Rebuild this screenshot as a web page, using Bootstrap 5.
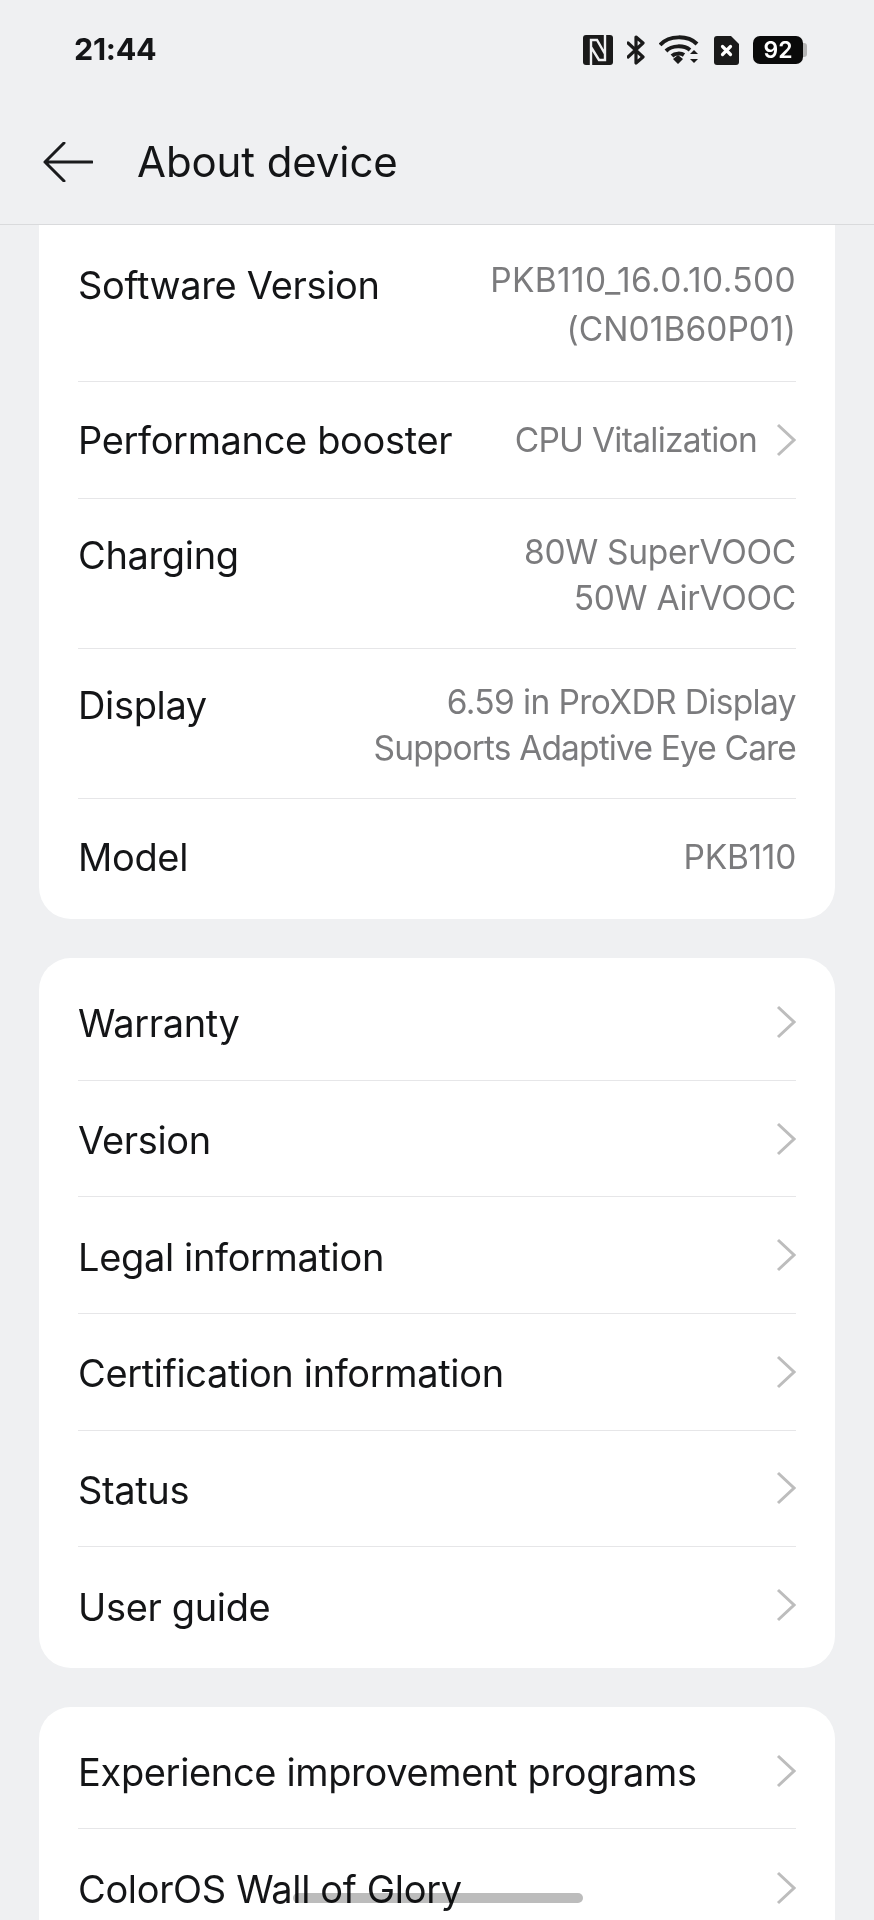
<!DOCTYPE html>
<html lang="en">
  <head>
    <meta charset="UTF-8" />
    <title>About device</title>
    <link href="https://cdn.jsdelivr.net/npm/bootstrap@5.3.0/dist/css/bootstrap.min.css" rel="stylesheet" />
    <script src="https://cdn.jsdelivr.net/npm/bootstrap@5.3.0/dist/js/bootstrap.bundle.min.js"></script>
    <style>
      html, body { height: 1920px; overflow: hidden; }
      body { background: #eff0f2; font-family: Inter, "Liberation Sans", sans-serif; color: #141517; position: relative; }
      .status-strip { height: 100px; padding: 0 71px 0 74px; }
      .clock { font-size: 30.5px; font-weight: 700; line-height: 1; letter-spacing: -0.3px; margin-top: -2px; }
      .status-icons { gap: 14px; }
      .batt { width: 50px; height: 28px; background: #0a0a0a; color: #fff; border-radius: 7px; font-size: 23px; font-weight: 600; line-height: 28px; text-align: center; position: relative; }
      .batt::after { content: ""; position: absolute; right: -4px; top: 7px; width: 4px; height: 14px; background: #b5b5b5; border-radius: 0 3px 3px 0; }
      .title-bar { height: 125px; padding-left: 43px; gap: 44px; border-bottom: 1px solid #d9dadc; }
      .title-text { font-size: 42px; font-weight: 420; line-height: 1; margin: 0; letter-spacing: -0.1px; }
      .scroll-area { height: 1695px; overflow: hidden; padding: 0 39px; }
      .panel { background: #fff; border-radius: 0 0 32px 32px; padding: 0 39px 4px; margin-bottom: 39px; }
      .panel-full { border-radius: 32px; padding-top: 6px; }
      .panel-full .row-label { padding-top: 3px; }
      .info-row { border-bottom: 1px solid #e6e6e8; height: 116.6px; }
      .info-row:last-child { border-bottom: 0; }
      .row-top { height: 157px; padding-top: 34px; }
      .row-top .row-value { line-height: 49px; margin-top: -3px; }
      .row-two { height: 150px; padding-top: 30px; }
      .row-label { font-size: 38px; line-height: 52px; font-weight: 420; letter-spacing: -0.35px; white-space: nowrap; }
      .row-value { font-size: 33.5px; line-height: 46px; color: #7b7b7d; text-align: right; font-weight: 400; letter-spacing: -0.3px; white-space: nowrap; }
      .val-wide { letter-spacing: 0.37px; }
      .val-mid { letter-spacing: 0.05px; }
      .val-tight { letter-spacing: -0.63px; }
      .val-tighter { letter-spacing: -0.85px; }
      .val-cpu { letter-spacing: -0.72px; }
      .value-link { gap: 19px; }
      .chev { flex: none; }
      .home-pill { position: absolute; left: 293px; top: 1893px; width: 290px; height: 10px; background: #bcbcbc; mix-blend-mode: multiply; border-radius: 5px; }
    </style>
  </head>
  <body>
    <div class="status-strip d-flex align-items-center justify-content-between">
      <span class="clock">21:44</span>
      <div class="status-icons d-flex align-items-center">
        <svg width="30" height="30" viewBox="0 0 30 30"><rect width="30" height="30" rx="3" fill="#1a1a1a"/><path d="M8 30V5h6l8 14M22 0v25h-6l-8-13" fill="none" stroke="#eff0f2" stroke-width="2.4"/></svg>
        <svg width="18" height="30" viewBox="0 0 18 30"><path d="M1 8l15 14-7 6V2l7 6L1 22" fill="none" stroke="#1a1a1a" stroke-width="3.2" stroke-linecap="round" stroke-linejoin="round"/></svg>
        <svg width="41" height="30" viewBox="0 0 41 30"><g fill="none" stroke="#1a1a1a" stroke-width="4"><path d="M1 10C10 0 29 0 38 9"/><path d="M7 16c6-6 18-6 24-1"/><path d="M13 21c3-3 9-3 12 -1"/></g><path d="M14 24l5-4 5 4-5 5zM31 19l4-4 4 4zM31 24h8l-4 4z" fill="#1a1a1a"/></svg>
        <svg width="25" height="29" viewBox="0 0 25 29"><path d="M3 0h14l8 8v18a3 3 0 0 1-3 3H3a3 3 0 0 1-3-3V3a3 3 0 0 1 3-3z" fill="#1a1a1a"/><path d="M8.5 10.5l8 8M16.5 10.5l-8 8" stroke="#fff" stroke-width="3.2" stroke-linecap="round"/></svg>
        <div class="batt">92</div>
      </div>
    </div>

    <div class="title-bar d-flex align-items-center">
      <svg width="50" height="40" viewBox="0 0 50 40"><path d="M49 20H2M21 1L2 20l19 19" fill="none" stroke="#1a1b1d" stroke-width="3" stroke-linecap="round" stroke-linejoin="round"/></svg>
      <h1 class="title-text">About device</h1>
    </div>

    <div class="scroll-area">
      <div class="panel">
        <div class="info-row row-top d-flex justify-content-between align-items-start">
          <span class="row-label">Software Version</span>
          <span class="row-value"><span class="val-wide">PKB110_16.0.10.500</span><br /><span class="val-mid">(CN01B60P01)</span></span>
        </div>
        <div class="info-row d-flex justify-content-between align-items-center">
          <span class="row-label">Performance booster</span>
          <span class="d-flex align-items-center value-link">
            <span class="row-value val-cpu">CPU Vitalization</span>
            <svg class="chev" width="20" height="34" viewBox="0 0 20 34"><path d="M2 2l16 15L2 32" fill="none" stroke="#bdbdbd" stroke-width="3"/></svg>
          </span>
        </div>
        <div class="info-row row-two d-flex justify-content-between align-items-start">
          <span class="row-label">Charging</span>
          <span class="row-value">80W SuperVOOC<br />50W AirVOOC</span>
        </div>
        <div class="info-row row-two d-flex justify-content-between align-items-start">
          <span class="row-label">Display</span>
          <span class="row-value"><span class="val-tight">6.59 in ProXDR Display</span><br /><span class="val-tighter">Supports Adaptive Eye Care</span></span>
        </div>
        <div class="info-row d-flex justify-content-between align-items-center">
          <span class="row-label">Model</span>
          <span class="row-value">PKB110</span>
        </div>
      </div>

      <div class="panel panel-full" id="linksPanel"></div>
      <div class="panel panel-full" id="morePanel"></div>
    </div>

    <div class="home-pill"></div>

    <script>
      const chevron = '<svg class="chev" width="20" height="34" viewBox="0 0 20 34"><path d="M2 2l16 15L2 32" fill="none" stroke="#bdbdbd" stroke-width="3"/></svg>';
      function addRows(id, labels) {
        document.getElementById(id).innerHTML = labels
          .map((t) => `<div class="info-row d-flex justify-content-between align-items-center"><span class="row-label">${t}</span>${chevron}</div>`)
          .join("");
      }
      addRows("linksPanel", ["Warranty", "Version", "Legal information", "Certification information", "Status", "User guide"]);
      addRows("morePanel", ["Experience improvement programs", "ColorOS Wall of Glory"]);
    </script>
  </body>
</html>
